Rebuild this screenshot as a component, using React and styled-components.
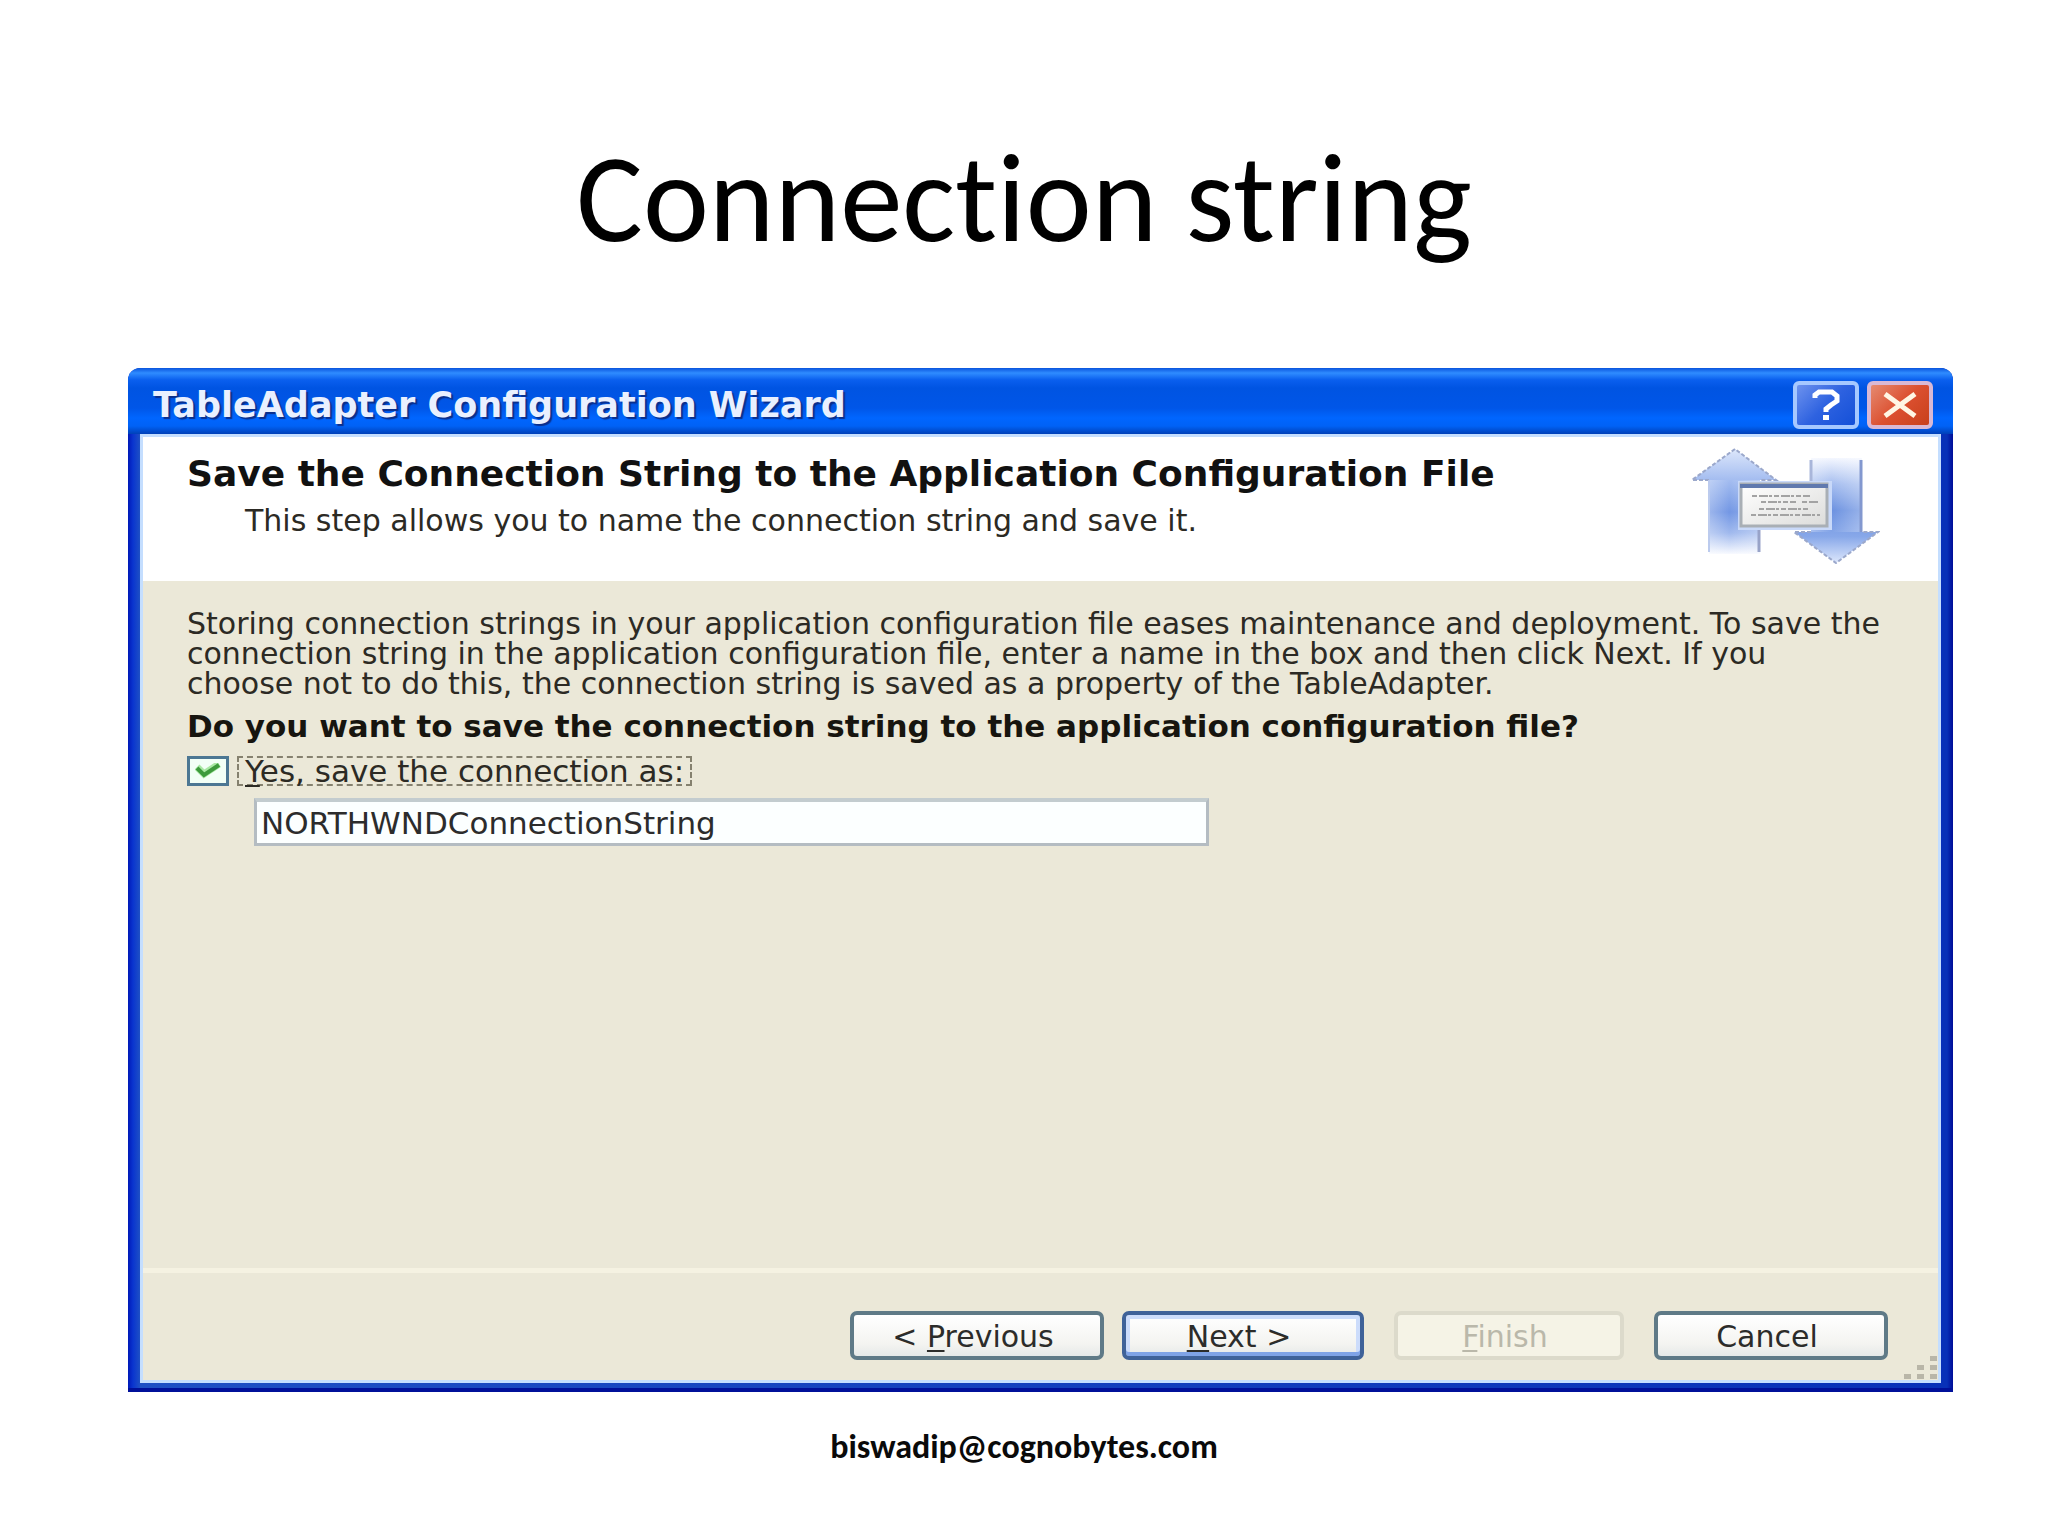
import { useState } from "react";
import styled, { createGlobalStyle } from "styled-components";

const App = () => {
	const [isSaved, setIsSaved] = useState(true);
	const [name, setName] = useState("NORTHWNDConnectionString");

	return (
		<>
			<GlobalStyle />
			<Slide>
				<SlideTitle>Connection string</SlideTitle>
				<Dialog>
					<TitleBar>
						<DialogTitle>TableAdapter Configuration Wizard</DialogTitle>
						<TitleButtons>
							<TitleButton type="button" aria-label="Help">
								<HelpIcon />
							</TitleButton>
							<TitleButton type="button" aria-label="Close" $isClose>
								<CloseIcon />
							</TitleButton>
						</TitleButtons>
					</TitleBar>
					<Content>
						<Header>
							<HeaderText>
								<Heading>
									Save the Connection String to the Application Configuration File
								</Heading>
								<SubHeading>
									This step allows you to name the connection string and save it.
								</SubHeading>
							</HeaderText>
							<ArrowsIcon />
						</Header>
						<Form>
							<Description>
								Storing connection strings in your application configuration file
								eases maintenance and deployment. To save the
								<br />
								connection string in the application configuration file, enter a
								name in the box and then click Next. If you
								<br />
								choose not to do this, the connection string is saved as a
								property of the TableAdapter.
							</Description>
							<Question>
								Do you want to save the connection string to the application
								configuration file?
							</Question>
							<CheckRow>
								<CheckBox
									id="save"
									type="checkbox"
									checked={isSaved}
									onChange={(e) => setIsSaved(e.target.checked)}
								/>
								{isSaved && <CheckIcon />}
								<CheckLabel htmlFor="save">
									<Key>Y</Key>es, save the connection as:
								</CheckLabel>
							</CheckRow>
							<NameInput
								type="text"
								aria-label="Connection name"
								value={name}
								onChange={(e) => setName(e.target.value)}
							/>
						</Form>
						<Footer>
							<StepButtons>
								<Button type="button" $width={254}>
									&lt; <Key>P</Key>revious
								</Button>
								<Button type="button" $width={242} $isDefault>
									<Key>N</Key>ext &gt;
								</Button>
							</StepButtons>
							<Button type="button" $width={230} disabled>
								<Key>F</Key>inish
							</Button>
							<Button type="button" $width={234}>
								Cancel
							</Button>
						</Footer>
						<Grip />
					</Content>
				</Dialog>
				<SlideFooter>biswadip@cognobytes.com</SlideFooter>
			</Slide>
		</>
	);
};

const HelpIcon = () => (
	<svg width="30" height="32" viewBox="0 0 30 32" fill="none">
		<path
			d="M4 9V6L8 3H21L26 7V12L20 16L15 20V23"
			stroke="#fff"
			strokeWidth="5"
		/>
		<path d="M12 26H18V31H12Z" fill="#fff" />
	</svg>
);

const CloseIcon = () => (
	<svg width="36" height="28" viewBox="0 0 36 28" fill="none">
		<path d="M3 3L33 25M33 3L3 25" stroke="#fff6e4" strokeWidth="5" />
	</svg>
);

const CheckIcon = () => (
	<CheckMark width="26" height="16" viewBox="0 0 26 16" fill="none">
		<path d="M2 4L9 11L24 1" stroke="#a9e8a4" strokeWidth="7" />
		<path d="M2 5L9 12L24 2" stroke="#3d9a3c" strokeWidth="4" />
	</CheckMark>
);

const ArrowsIcon = () => (
	<Arrows width="190" height="116" viewBox="0 0 190 116" fill="none">
		<defs>
			<linearGradient id="up" x1="0" y1="0" x2="0" y2="1">
				<stop offset="0" stopColor="#dde7fb" />
				<stop offset="0.3" stopColor="#a3bcf0" />
				<stop offset="0.6" stopColor="#7397e4" />
				<stop offset="0.8" stopColor="#a0b9ee" />
				<stop offset="1" stopColor="#f8faff" />
			</linearGradient>
			<linearGradient id="down" x1="0" y1="0" x2="0" y2="1">
				<stop offset="0" stopColor="#f4f7ff" />
				<stop offset="0.25" stopColor="#a5bdef" />
				<stop offset="0.5" stopColor="#6b91e0" />
				<stop offset="0.75" stopColor="#88a8e9" />
				<stop offset="1" stopColor="#dde7fc" />
			</linearGradient>
			<linearGradient id="shine" x1="0" y1="0" x2="1" y2="0">
				<stop offset="0" stopColor="#fff" stopOpacity="0.3" />
				<stop offset="0.4" stopColor="#fff" stopOpacity="0" />
				<stop offset="1" stopColor="#fff" stopOpacity="0.3" />
			</linearGradient>
			<linearGradient id="paper" x1="0" y1="0" x2="1" y2="1">
				<stop offset="0" stopColor="#fff" />
				<stop offset="1" stopColor="#dcdcda" />
			</linearGradient>
		</defs>
		<path d="M45 1L86 32H70V106H19V32H2Z" fill="url(#up)" />
		<path d="M19 32H70V106H19Z" fill="url(#shine)" />
		<path
			d="M19 32H2L45 1L86 32H70"
			stroke="#9ba8cb"
			strokeWidth="2"
			strokeDasharray="4 2"
		/>
		<path d="M19 32V104" stroke="#bccbee" strokeWidth="2" />
		<path d="M69 80V104" stroke="#98a3c8" strokeWidth="3" />
		<path d="M121 10H172V84H188L146 115L104 84H121Z" fill="url(#down)" />
		<path d="M121 10H172V84H121Z" fill="url(#shine)" />
		<path
			d="M121 84H104L146 115L188 84H172"
			stroke="#9ba8cb"
			strokeWidth="2"
			strokeDasharray="4 2"
		/>
		<path d="M121 12V36" stroke="#a9b6da" strokeWidth="3" />
		<path d="M171 12V84" stroke="#8398cf" strokeWidth="3" />
		<path d="M48 33H142V82H48Z" fill="#c9d9f9" />
		<path d="M51 36H137V78H51Z" fill="url(#paper)" stroke="#a9afb5" strokeWidth="3" />
		<path d="M50 38H138" stroke="#6079ae" strokeWidth="4" />
		<path
			d="M62 48H120M71 54H106M112 54H128M69 61H118M61 67H130"
			stroke="#a3a3a3"
			strokeWidth="2"
			strokeDasharray="5 2 9 1 3 2"
		/>
	</Arrows>
);

const Grip = () => (
	<GripIcon width="34" height="24" viewBox="0 0 34 24" fill="#b9b6a8">
		<path d="M26 0H33V5H26ZM13 9H20V14H13ZM26 9H33V14H26ZM0 18H7V23H0ZM13 18H20V23H13ZM26 18H33V23H26Z" />
	</GripIcon>
);

const GlobalStyle = createGlobalStyle`
	* {
		box-sizing: border-box;
	}

	body {
		margin: 0;
		background: #fff;
	}

	h1, h2, h3, p {
		margin: 0;
	}

	button, input {
		font: inherit;
	}
`;

const Slide = styled.main`
	display: flex;
	flex-direction: column;
	min-height: 100vh;
	padding: 0 95px 0 128px;
`;

const SlideTitle = styled.h1`
	display: grid;
	place-items: center;
	height: 368px;
	padding: 30px 33px 0 0;
	color: #000;
	font-family: Calibri, Carlito, Lato, sans-serif;
	font-size: 125px;
	font-weight: 400;
	font-variant-ligatures: none;
	line-height: 150px;
`;

const Dialog = styled.section`
	display: flex;
	flex: 1;
	flex-direction: column;
	padding: 0 12px 9px;
	border-radius: 12px 12px 0 0;
	background: linear-gradient(
		to right,
		#0019b8 0,
		#0a35cf 5px,
		#1e50c4 12px,
		#0831b8 calc(100% - 12px),
		#0831b8 calc(100% - 6px),
		#000d98 100%
	);
	box-shadow: inset 0 -4px 0 #00109a;
	color: #2c2a24;
	font-family: "DejaVu Sans", Verdana, sans-serif;
	font-size: 30px;
	line-height: 30px;
`;

const TitleBar = styled.header`
	display: flex;
	align-items: center;
	justify-content: space-between;
	height: 66px;
	margin: 0 -12px;
	padding: 8px 20px 0 25px;
	border-radius: 12px 12px 0 0;
	background: linear-gradient(
		#0a54dd 0,
		#2f8cff 5px,
		#0a5fee 12px,
		#0054e2 20px,
		#0056e8 40px,
		#0066ff 50px,
		#0062f6 58px,
		#0040b8 66px
	);
`;

const DialogTitle = styled.h2`
	color: #e9f0ff;
	font-size: 35px;
	font-weight: 700;
	line-height: 36px;
	text-shadow: 2px 2px 1px #0a2f8c;
`;

const TitleButtons = styled.div`
	display: flex;
	gap: 8px;
`;

const TitleButton = styled.button`
	display: grid;
	place-items: center;
	width: 66px;
	height: 48px;
	padding: 0;
	border: 4px solid ${(props) => (props.$isClose ? "#d9b8d4" : "#a6c8ff")};
	border-radius: 6px;
	background: ${(props) =>
		props.$isClose
			? "linear-gradient(135deg, #e58a70, #dc5030 50%, #c8401c)"
			: "linear-gradient(135deg, #6d92ee, #2e62e0 50%, #1450d8)"};
`;

const Content = styled.div`
	position: relative;
	display: flex;
	flex: 1;
	flex-direction: column;
	border: 3px solid #c4deff;
	background: #ebe8d8;
`;

const Header = styled.div`
	display: flex;
	justify-content: space-between;
	height: 144px;
	padding: 11px 58px 0 44px;
	background: #fff;
`;

const HeaderText = styled.div`
	display: flex;
	flex-direction: column;
	gap: 14px;
	padding-top: 8px;
`;

const Heading = styled.h3`
	color: #111;
	font-size: 36px;
	font-weight: 700;
	line-height: 36px;
`;

const SubHeading = styled.p`
	padding-left: 58px;
`;

const Arrows = styled.svg`
	flex: none;
`;

const Form = styled.form`
	display: flex;
	flex: 1;
	flex-direction: column;
	align-items: flex-start;
	padding: 28px 46px 0 44px;
`;

const Description = styled.p``;

const Question = styled.p`
	margin-top: 12px;
	color: #17150f;
	font-size: 31px;
	font-weight: 700;
`;

const CheckRow = styled.div`
	display: grid;
	grid-template-columns: 42px auto;
	column-gap: 8px;
	align-items: center;
	margin-top: 15px;
`;

const CheckBox = styled.input`
	grid-area: 1 / 1;
	width: 42px;
	height: 30px;
	margin: 0;
	border: 3px solid #4c7793;
	background: #f2fff6;
	appearance: none;
`;

const CheckMark = styled.svg`
	grid-area: 1 / 1;
	justify-self: center;
	pointer-events: none;
`;

const CheckLabel = styled.label`
	grid-area: 1 / 2;
	padding: 0 6px;
	border: 2px dashed #85816f;
	font-size: 31px;
	line-height: 26px;
`;

const Key = styled.u`
	text-decoration-thickness: 2px;
	text-underline-offset: 3px;
`;

const NameInput = styled.input`
	width: 56%;
	height: 48px;
	margin: 12px 0 0 67px;
	padding: 0 4px;
	border: 3px solid #b4bcc2;
	border-top: 4px solid #c3cccf;
	background: #fcffff;
	color: #2c2c2c;
	font-size: 31px;
	outline: none;
`;

const Footer = styled.footer`
	display: flex;
	justify-content: flex-end;
	gap: 30px;
	padding: 38px 50px 20px;
	border-top: 5px solid #f5f2e2;
`;

const StepButtons = styled.div`
	display: flex;
	gap: 18px;
`;

const Button = styled.button`
	width: ${(props) => props.$width}px;
	height: 49px;
	padding: 2px 8px 0 0;
	border: 4px solid ${(props) => (props.$isDefault ? "#3f6299" : "#5f7a87")};
	border-radius: 7px;
	background: linear-gradient(#fff, #f4f4f1 70%, #e6e9e8);
	box-shadow: ${(props) =>
		props.$isDefault
			? "inset 0 -4px 0 #7fa3e6, inset 0 0 0 4px #ccdcfb"
			: "none"};
	color: #2c2c2a;

	&:disabled {
		border-color: #dcdacb;
		background: #f5f3e6;
		color: #bab8aa;
	}
`;

const GripIcon = styled.svg`
	position: absolute;
	right: 0;
	bottom: 0;
`;

const SlideFooter = styled.p`
	height: 144px;
	padding: 35px 33px 0 0;
	color: #0a0a0a;
	font-family: Calibri, Carlito, Lato, sans-serif;
	font-size: 34px;
	font-weight: 700;
	line-height: 40px;
	text-align: center;
`;

export default App;
